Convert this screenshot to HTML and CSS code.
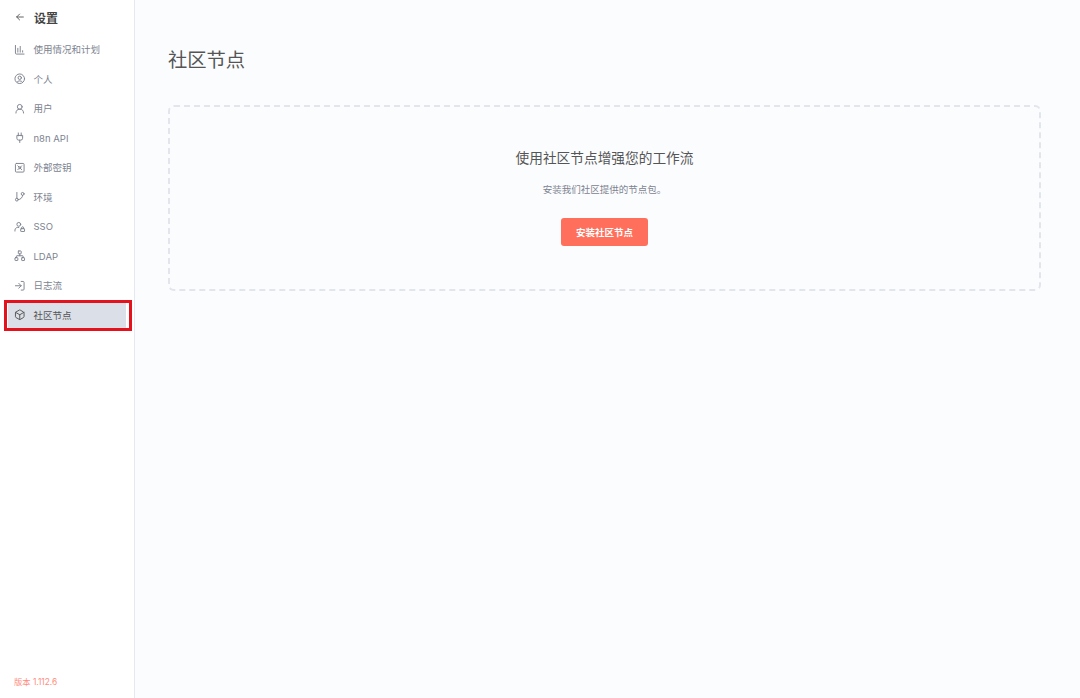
FILE: index.html
```html
<!DOCTYPE html>
<html lang="zh-CN">
<head>
    <meta charset="UTF-8">
    <title>社区节点</title>
    <link rel="stylesheet" href="styles.css">
</head>
<body>
    <div class="app">
        <aside class="sidebar">
            <div class="side-header">
                <svg class="back-icon" viewBox="0 0 24 24"><path d="M20 12H4M11 5l-7 7 7 7"/></svg>
                <span>设置</span>
            </div>
            <nav class="side-menu">
                <div class="menu-item">
                    <svg viewBox="0 0 24 24"><path d="M3 3v16a2 2 0 0 0 2 2h16M8 17V9M13 17V5M18 17v-3"/></svg>
                    <span>使用情况和计划</span>
                </div>
                <div class="menu-item">
                    <svg viewBox="0 0 24 24"><circle cx="12" cy="12" r="10"/><circle cx="12" cy="10" r="3.5"/><path d="M6.5 19a6.5 6.5 0 0 1 11 0"/></svg>
                    <span>个人</span>
                </div>
                <div class="menu-item">
                    <svg viewBox="0 0 24 24"><circle cx="12" cy="8" r="5"/><path d="M20 21a8 8 0 0 0-16 0"/></svg>
                    <span>用户</span>
                </div>
                <div class="menu-item">
                    <svg viewBox="0 0 24 24"><path d="M12 22v-5M9 8V2M15 8V2M18 8v5a4 4 0 0 1-4 4h-4a4 4 0 0 1-4-4V8z"/></svg>
                    <span>n8n API</span>
                </div>
                <div class="menu-item">
                    <svg viewBox="0 0 24 24"><rect x="3" y="3" width="18" height="18" rx="2"/><path d="M8 8l2.5 2.5M16 8l-2.5 2.5M8 16l2.5-2.5M16 16l-2.5-2.5"/><circle cx="12" cy="12" r="2"/></svg>
                    <span>外部密钥</span>
                </div>
                <div class="menu-item">
                    <svg viewBox="0 0 24 24"><path d="M6 3v12"/><circle cx="6" cy="18" r="3"/><circle cx="18" cy="6" r="3"/><path d="M18 9a9 9 0 0 1-9 9"/></svg>
                    <span>环境</span>
                </div>
                <div class="menu-item">
                    <svg viewBox="0 0 24 24"><circle cx="10" cy="7" r="4"/><path d="M2 21v-2a6 6 0 0 1 8-5.6"/><rect x="14" y="16" width="8" height="6" rx="1"/><path d="M16 16v-2a2 2 0 0 1 4 0v2"/></svg>
                    <span>SSO</span>
                </div>
                <div class="menu-item">
                    <svg viewBox="0 0 24 24"><rect x="9" y="2" width="6" height="6" rx="1"/><rect x="2" y="16" width="6" height="6" rx="1"/><rect x="16" y="16" width="6" height="6" rx="1"/><path d="M5 16v-3a1 1 0 0 1 1-1h12a1 1 0 0 1 1 1v3M12 12V8"/></svg>
                    <span>LDAP</span>
                </div>
                <div class="menu-item">
                    <svg viewBox="0 0 24 24"><path d="M15 3h4a2 2 0 0 1 2 2v14a2 2 0 0 1-2 2h-4M3 12h12M10 7l5 5-5 5"/></svg>
                    <span>日志流</span>
                </div>
                <div class="menu-item active">
                    <svg viewBox="0 0 24 24"><path d="M21 8a2 2 0 0 0-1-1.7l-7-4a2 2 0 0 0-2 0l-7 4A2 2 0 0 0 3 8v8a2 2 0 0 0 1 1.7l7 4a2 2 0 0 0 2 0l7-4a2 2 0 0 0 1-1.7z"/><path d="M3.3 7L12 12l8.7-5M12 22V12"/></svg>
                    <span>社区节点</span>
                    <div class="mark"></div>
                </div>
            </nav>
            <div class="version">版本 1.112.6</div>
        </aside>

        <main class="content">
            <h1 class="page-title">社区节点</h1>
            <div class="empty-card">
                <div class="empty-title">使用社区节点增强您的工作流</div>
                <div class="empty-desc">安装我们社区提供的节点包。</div>
                <button class="install-btn">安装社区节点</button>
            </div>
        </main>
    </div>
</body>
</html>
```

FILE: styles.css
```css
* {
    margin: 0;
    padding: 0;
    box-sizing: border-box;
}

body {
    font-family: Inter, "Noto Sans CJK SC", sans-serif;
    background: #fbfcfe;
    color: #555;
}

.app {
    display: flex;
    height: 698px;
    overflow: hidden;
}

.sidebar {
    width: 135px;
    flex-shrink: 0;
    background: #fff;
    border-right: 1px solid #e6e8f0;
    display: flex;
    flex-direction: column;
}

.side-header {
    height: 34.5px;
    padding-left: 15px;
    display: flex;
    align-items: center;
    gap: 9px;
    font-size: 12px;
    font-weight: 600;
    color: #444;
}

.back-icon {
    width: 10px;
    height: 10px;
    fill: none;
    stroke: #555;
    stroke-width: 2.2;
    stroke-linecap: round;
    stroke-linejoin: round;
}

.side-menu {
    flex: 1;
}

.menu-item {
    position: relative;
    height: 29.5px;
    margin: 0 8px;
    padding-left: 6px;
    display: flex;
    align-items: center;
    gap: 8px;
    font-size: 9.5px;
    line-height: 14px;
    color: #7d838f;
}

.menu-item span {
    padding-top: 2px;
}

.menu-item svg {
    width: 11.5px;
    height: 11.5px;
    flex-shrink: 0;
    fill: none;
    stroke: #7d838f;
    stroke-width: 2;
    stroke-linecap: round;
    stroke-linejoin: round;
}

.menu-item.active {
    background: #dbdfe7;
    color: #555;
}

.menu-item.active svg {
    stroke: #555;
}

/* red annotation box from the original screenshot */
.mark {
    position: absolute;
    top: 0;
    left: -4px;
    right: -6px;
    bottom: -1px;
    border: 3px solid #e3121c;
}

.version {
    height: 23px;
    padding-left: 14px;
    font-size: 8.3px;
    color: #ff6f5c;
    opacity: 0.8;
}

.content {
    flex: 1;
    padding: 47px 39px 0 33px;
}

.page-title {
    font-size: 19.3px;
    font-weight: 400;
    line-height: 26px;
    color: #555;
    margin-bottom: 32px;
}

.empty-card {
    height: 186px;
    border: 2px dashed #e2e5ec;
    border-radius: 6px;
    display: flex;
    flex-direction: column;
    align-items: center;
    padding-top: 41px;
}

.empty-title {
    font-size: 13.7px;
    line-height: 20px;
    color: #555;
    margin-bottom: 15px;
}

.empty-desc {
    font-size: 9.5px;
    line-height: 14px;
    color: #7d838f;
    margin-bottom: 21px;
}

.install-btn {
    width: 87px;
    height: 28px;
    border: none;
    border-radius: 3px;
    background: #ff6f5c;
    color: #fff;
    font-family: inherit;
    font-size: 9.5px;
    font-weight: 600;
}
```
